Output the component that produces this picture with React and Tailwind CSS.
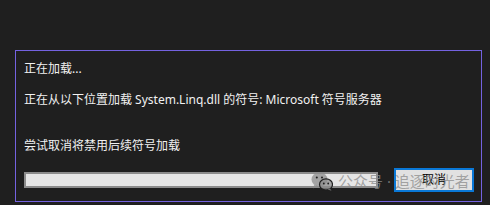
import React from "react";

function WeChatIcon() {
  return (
    <svg width="22" height="19" viewBox="0 0 22 19">
      <ellipse cx="8.5" cy="7.5" rx="8" ry="7" fill="currentColor" />
      <path d="M3 13 L2.5 16.5 L6.5 13.5 Z" fill="currentColor" />
      <ellipse cx="15" cy="12.5" rx="6.5" ry="5.6" fill="currentColor" stroke="#1f1f1f" strokeWidth="1.2" />
      <path d="M19 16.5 L20.5 18.8 L16.5 17.5 Z" fill="currentColor" />
      <circle cx="5.8" cy="5.6" r="1" fill="#1f1f1f" />
      <circle cx="11" cy="5.6" r="1" fill="#1f1f1f" />
      <circle cx="12.8" cy="11.5" r="0.9" fill="#1f1f1f" />
      <circle cx="17.2" cy="11.5" r="0.9" fill="#1f1f1f" />
    </svg>
  );
}

export default function App() {
  return (
    <div
      className="relative w-[490px] h-[205px] bg-[#1f1f1f] overflow-hidden text-[12px] text-[#f1f1f1]"
      style={{ fontFamily: '"Noto Sans", "Noto Sans CJK SC", sans-serif' }}
    >
      <div className="pt-[50px] pl-[15px]">
        <div className="w-[467px] h-[152px] border border-[#7462e0] pl-2 pr-[7px] pt-2 flex flex-col">
          <div className="h-5 leading-5">正在加载...</div>
          <div className="h-5 leading-5 mt-[11px]">
            正在从以下位置加载 System.Linq.dll 的符号: Microsoft 符号服务器
          </div>
          <div className="h-5 leading-5 mt-[26px]">尝试取消将禁用后续符号加载</div>
          <div className="flex items-center mt-3 h-6">
            <div className="flex-1 h-4 bg-[#e6e6e6] border-2 border-[#8c8c8c] mr-4" />
            <button className="w-20 h-6 bg-[#e1e1e1] border-2 border-[#0a78d7] text-black text-[12px] leading-5">
              取消
            </button>
          </div>
        </div>
      </div>
      <div className="absolute left-[311px] top-[171px] flex items-center gap-[4px] text-[15px] leading-5 text-[rgba(140,140,140,0.75)]">
        <WeChatIcon />
        <span className="ml-[1px]">公众号 · 追逐时光者</span>
      </div>
    </div>
  );
}
